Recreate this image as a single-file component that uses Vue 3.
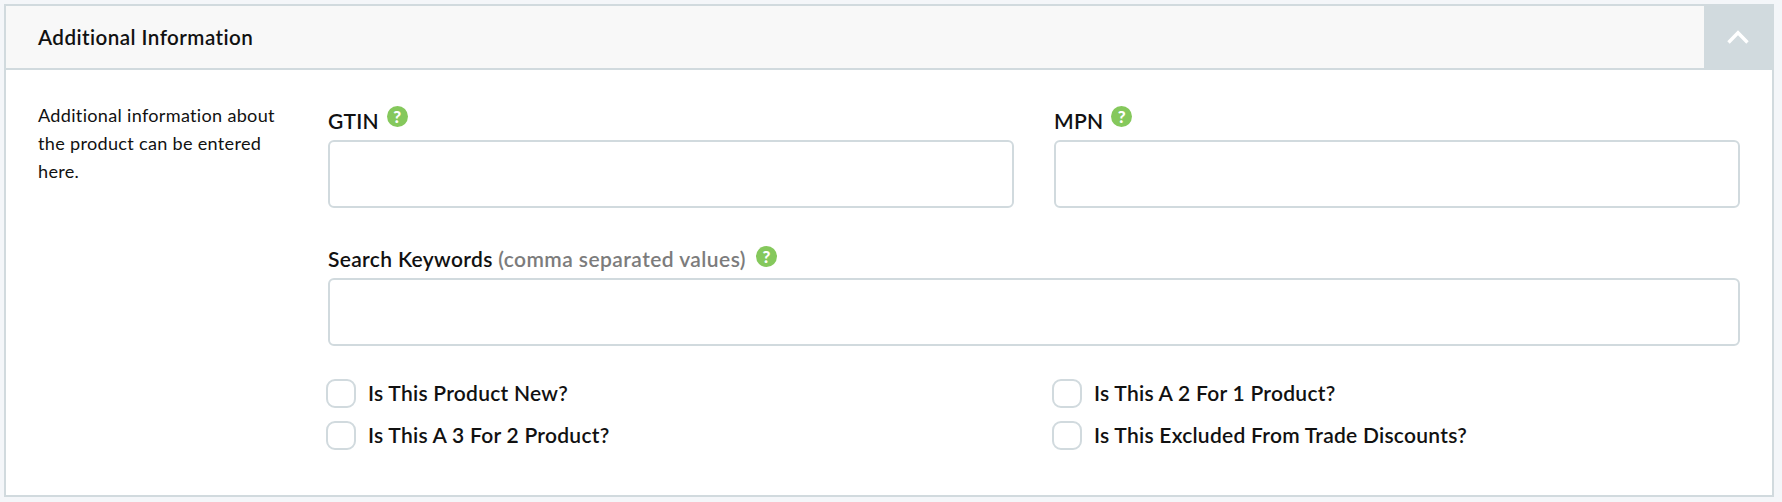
<script setup>
const checks = ['Is This Product New?', 'Is This A 2 For 1 Product?', 'Is This A 3 For 2 Product?', 'Is This Excluded From Trade Discounts?']
</script>

<template>
  <section class="panel">
    <header class="head">
      <h2>Additional Information</h2>
      <button class="toggle" type="button" aria-label="Collapse">
        <svg width="22" height="14" viewBox="0 0 22 14"><path d="M1.5 12.5 L11 2.8 L20.5 12.5" fill="none" stroke="#fff" stroke-width="3.4"/></svg>
      </button>
    </header>
    <div class="body">
      <p class="intro">Additional information about the product can be entered here.</p>
      <div class="form">
        <div class="two">
          <div class="field">
            <label>GTIN<span class="help">?</span></label>
            <input type="text" />
          </div>
          <div class="field">
            <label>MPN<span class="help">?</span></label>
            <input type="text" />
          </div>
        </div>
        <div class="field">
          <label class="keywords">Search Keywords <span class="muted">(comma separated values)</span><span class="help wide">?</span></label>
          <input type="text" />
        </div>
        <div class="checks">
          <div v-for="c in checks" :key="c" class="check"><span class="box"></span>{{ c }}</div>
        </div>
      </div>
    </div>
  </section>
</template>

<style>
body { background: #f4f6f9; }
</style>

<style scoped>
.panel { box-sizing: border-box; width: 1770px; height: 493px; margin: 4px 0 0 4px; border: 2px solid #d1dade; background: #fff; font-family: Lato, "Liberation Sans", sans-serif; color: #111; display: flex; flex-direction: column; }
.head { height: 62px; flex: none; box-sizing: content-box; display: flex; align-items: center; justify-content: space-between; background: #f8f8f8; border-bottom: 2px solid #d1dade; padding-left: 32px; }
h2 { margin: 0; font-size: 20.6px; font-weight: 600; letter-spacing: 0.45px; }
.toggle { width: 68px; height: 62px; border: 0; background: #d1dade; padding: 0; display: flex; align-items: center; justify-content: center; }
.body { display: flex; padding: 30px 32px 0; }
.intro { width: 290px; flex: none; box-sizing: border-box; padding-right: 40px; margin: 1px 0 0; font-size: 18.1px; line-height: 28px; letter-spacing: 0.3px; }
.form { flex: 1; display: flex; flex-direction: column; gap: 30px; }
.two { display: grid; grid-template-columns: 1fr 1fr; gap: 40px; }
.field { display: flex; flex-direction: column; }
label { font-size: 21px; font-weight: 600; display: flex; align-items: center; height: 40px; white-space: pre; letter-spacing: 0.2px; }
.keywords { letter-spacing: 0.33px; }
.muted { color: #7c7c7c; letter-spacing: 0.43px; }
.help { width: 21px; height: 21px; border-radius: 50%; background: #85c85c; color: #fff; font-size: 17px; font-weight: 900; display: inline-flex; align-items: center; justify-content: center; margin-bottom: 7px; margin-left: 8px; letter-spacing: 0; }
.help.wide { margin-left: 10px; margin-bottom: 3px; }
input { box-sizing: border-box; height: 68px; width: 100%; border: 2px solid #d1dade; border-radius: 6px; background: #fff; margin: 0; }
.checks { display: grid; grid-template-columns: 1fr 1fr; gap: 13px 40px; margin-top: 2px; }
.check { display: flex; align-items: center; gap: 12px; font-size: 21px; font-weight: 600; height: 29px; letter-spacing: 0.26px; }
.box { box-sizing: border-box; width: 30px; height: 29px; border: 2px solid #d1dade; border-radius: 9px; margin: 2px 0 0 -2px; }
</style>
